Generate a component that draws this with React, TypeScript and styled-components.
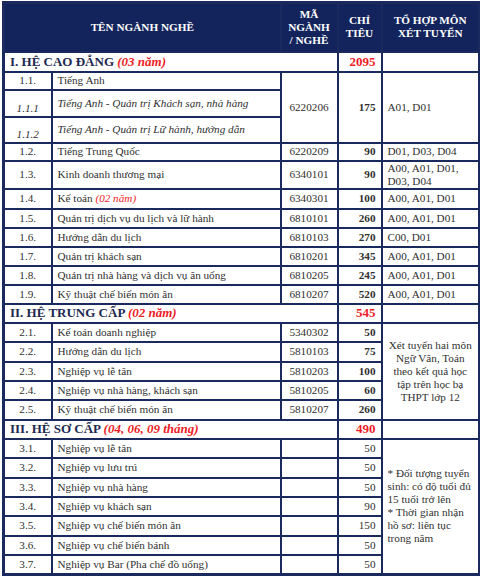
import React from "react";
import styled, { createGlobalStyle } from "styled-components";

const GlobalStyle = createGlobalStyle`
  html, body {
    margin: 0;
    padding: 0;
    background: #ffffff;
  }
  table, th, td {
    font-family: "Liberation Serif", "Times New Roman", serif;
  }
`;

const NAVY = "#13245c";
const LINE = "#1b2a5e";
const RED = "#ee1c25";

const Page = styled.div`
  width: 480px;
  height: 580px;
  padding: 1px 0 0 2px;
  box-sizing: border-box;
  font-family: "Liberation Serif", "Times New Roman", serif;
  color: #2b2b2b;
`;

const Table = styled.table`
  width: 476px;
  table-layout: fixed;
  border-collapse: collapse;
  border: 3px solid ${LINE};
  font-family: "Liberation Serif", "Times New Roman", serif;
  font-size: 11.2px;
  color: #303030;
`;

const HeadCell = styled.th`
  background: ${NAVY};
  color: #ffffff;
  font-weight: bold;
  font-size: 11.2px;
  line-height: 13px;
  text-align: center;
  vertical-align: middle;
  border: 2px solid ${LINE};
  padding: 0 2px;
`;

const Row = styled.tr<{ $h: number }>`
  height: ${(p) => p.$h}px;
`;

const Cell = styled.td<{
  $align?: "left" | "center" | "right";
  $bold?: boolean;
  $italic?: boolean;
  $valign?: "top" | "middle" | "bottom";
  $soft?: boolean;
}>`
  border: 2px solid ${LINE};
  ${(p) => (p.$soft ? "border-top-color: #8a90a6;" : "")}
  padding: ${(p) => (p.$valign === "bottom" ? "0 5px 1px" : "0 5px")};
  text-align: ${(p) => p.$align || "left"};
  vertical-align: ${(p) => p.$valign || "middle"};
  font-weight: ${(p) => (p.$bold ? "bold" : "normal")};
  font-style: ${(p) => (p.$italic ? "italic" : "normal")};
  line-height: 13px;
  white-space: nowrap;
  overflow: hidden;
`;

const NoteCell = styled.td<{ $align: "left" | "center" }>`
  border: 2px solid ${LINE};
  padding: 0 5px;
  text-align: ${(p) => p.$align};
  vertical-align: middle;
  font-size: 11.2px;
  line-height: 13px;
  color: #303030;
`;

const SectionCell = styled.td`
  border: 2px solid ${LINE};
  padding: 0 5px;
  font-weight: bold;
  font-size: 13px;
  color: #1e2a4f;
  white-space: nowrap;
  vertical-align: middle;
`;

const Note = styled.span`
  color: ${RED};
  font-style: italic;
  font-weight: bold;
`;

const NoteSmall = styled.span`
  color: ${RED};
  font-style: italic;
`;

const Total = styled.td`
  border: 2px solid ${LINE};
  padding: 0 5px;
  text-align: right;
  color: ${RED};
  font-weight: bold;
  font-size: 13px;
  vertical-align: middle;
`;

const Empty = styled.td`
  border: 2px solid ${LINE};
`;

type Item = {
  no: string;
  name: React.ReactNode;
  code: string;
  quota: string;
  combo?: string;
  h: number;
};

const caoDang: Item[] = [
  { no: "1.2.", name: "Tiếng Trung Quốc", code: "6220209", quota: "90", combo: "D01, D03, D04", h: 18 },
  { no: "1.3.", name: "Kinh doanh thương mại", code: "6340101", quota: "90", combo: "A00, A01, D01,\nD03, D04", h: 28 },
  {
    no: "1.4.",
    name: (
      <>
        Kế toán <NoteSmall>(02 năm)</NoteSmall>
      </>
    ),
    code: "6340301",
    quota: "100",
    combo: "A00, A01, D01",
    h: 20,
  },
  { no: "1.5.", name: "Quản trị dịch vụ du lịch và lữ hành", code: "6810101", quota: "260", combo: "A00, A01, D01", h: 19 },
  { no: "1.6.", name: "Hướng dẫn du lịch", code: "6810103", quota: "270", combo: "C00, D01", h: 19 },
  { no: "1.7.", name: "Quản trị khách sạn", code: "6810201", quota: "345", combo: "A00, A01, D01", h: 19 },
  { no: "1.8.", name: "Quản trị nhà hàng và dịch vụ ăn uống", code: "6810205", quota: "245", combo: "A00, A01, D01", h: 19 },
  { no: "1.9.", name: "Kỹ thuật chế biến món ăn", code: "6810207", quota: "520", combo: "A00, A01, D01", h: 19 },
];

const trungCap: Item[] = [
  { no: "2.1.", name: "Kế toán doanh nghiệp", code: "5340302", quota: "50", h: 19 },
  { no: "2.2.", name: "Hướng dẫn du lịch", code: "5810103", quota: "75", h: 20 },
  { no: "2.3.", name: "Nghiệp vụ lễ tân", code: "5810203", quota: "100", h: 19 },
  { no: "2.4.", name: "Nghiệp vụ nhà hàng, khách sạn", code: "5810205", quota: "60", h: 19 },
  { no: "2.5.", name: "Kỹ thuật chế biến món ăn", code: "5810207", quota: "260", h: 20 },
];

const soCap: Item[] = [
  { no: "3.1.", name: "Nghiệp vụ lễ tân", code: "", quota: "50", h: 19 },
  { no: "3.2.", name: "Nghiệp vụ lưu trú", code: "", quota: "50", h: 20 },
  { no: "3.3.", name: "Nghiệp vụ nhà hàng", code: "", quota: "50", h: 19 },
  { no: "3.4.", name: "Nghiệp vụ khách sạn", code: "", quota: "90", h: 19 },
  { no: "3.5.", name: "Nghiệp vụ chế biến món ăn", code: "", quota: "150", h: 20 },
  { no: "3.6.", name: "Nghiệp vụ chế biến bánh", code: "", quota: "50", h: 19 },
  { no: "3.7.", name: "Nghiệp vụ Bar (Pha chế đồ uống)", code: "", quota: "50", h: 20 },
];

const ComboText = styled.span`
  white-space: pre-line;
  line-height: 13px;
  display: inline-block;
`;

const App: React.FC = () => (
  <Page>
    <GlobalStyle />
    <Table>
      <colgroup>
        <col style={{ width: 48 }} />
        <col style={{ width: 229 }} />
        <col style={{ width: 57 }} />
        <col style={{ width: 44 }} />
        <col style={{ width: 98 }} />
      </colgroup>
      <thead>
        <Row $h={49}>
          <HeadCell colSpan={2}>TÊN NGÀNH NGHỀ</HeadCell>
          <HeadCell>
            MÃ
            <br />
            NGÀNH
            <br />/ NGHỀ
          </HeadCell>
          <HeadCell>
            CHỈ
            <br />
            TIÊU
          </HeadCell>
          <HeadCell>
            TỔ HỢP MÔN
            <br />
            XÉT TUYỂN
          </HeadCell>
        </Row>
      </thead>
      <tbody>
        <Row $h={20}>
          <SectionCell colSpan={3}>
            I. HỆ CAO ĐẲNG <Note>(03 năm)</Note>
          </SectionCell>
          <Total>2095</Total>
          <Empty />
        </Row>
        <Row $h={18}>
          <Cell $align="center">1.1.</Cell>
          <Cell>Tiếng Anh</Cell>
          <Cell rowSpan={3} $align="center">
            6220206
          </Cell>
          <Cell rowSpan={3} $align="right" $bold>
            175
          </Cell>
          <Cell rowSpan={3}>A01, D01</Cell>
        </Row>
        <Row $h={27}>
          <Cell $align="center" $italic $valign="bottom" $soft>
            1.1.1
          </Cell>
          <Cell $italic $soft>
            Tiếng Anh - Quản trị Khách sạn, nhà hàng
          </Cell>
        </Row>
        <Row $h={26}>
          <Cell $align="center" $italic $valign="bottom" $soft>
            1.1.2
          </Cell>
          <Cell $italic $soft>
            Tiếng Anh - Quản trị Lữ hành, hướng dẫn
          </Cell>
        </Row>
        {caoDang.map((r) => (
          <Row key={r.no} $h={r.h}>
            <Cell $align="center">{r.no}</Cell>
            <Cell>{r.name}</Cell>
            <Cell $align="center">{r.code}</Cell>
            <Cell $align="right" $bold>
              {r.quota}
            </Cell>
            <Cell>
              <ComboText>{r.combo}</ComboText>
            </Cell>
          </Row>
        ))}
        <Row $h={19}>
          <SectionCell colSpan={3}>
            II. HỆ TRUNG CẤP <Note>(02 năm)</Note>
          </SectionCell>
          <Total>545</Total>
          <Empty />
        </Row>
        {trungCap.map((r, i) => (
          <Row key={r.no} $h={r.h}>
            <Cell $align="center">{r.no}</Cell>
            <Cell>{r.name}</Cell>
            <Cell $align="center">{r.code}</Cell>
            <Cell $align="right" $bold>
              {r.quota}
            </Cell>
            {i === 0 && (
              <NoteCell rowSpan={trungCap.length} $align="center">
                Xét tuyển hai môn Ngữ Văn, Toán theo kết quả học tập trên học bạ THPT lớp 12
              </NoteCell>
            )}
          </Row>
        ))}
        <Row $h={19}>
          <SectionCell colSpan={3}>
            III. HỆ SƠ CẤP <Note>(04, 06, 09 tháng)</Note>
          </SectionCell>
          <Total>490</Total>
          <Empty />
        </Row>
        {soCap.map((r, i) => (
          <Row key={r.no} $h={r.h}>
            <Cell $align="center">{r.no}</Cell>
            <Cell>{r.name}</Cell>
            <Cell $align="center">{r.code}</Cell>
            <Cell $align="right">{r.quota}</Cell>
            {i === 0 && (
              <NoteCell rowSpan={soCap.length} $align="left">
                * Đối tượng tuyển sinh: có độ tuổi đủ 15 tuổi trở lên
                <br />* Thời gian nhận hồ sơ: liên tục trong năm
              </NoteCell>
            )}
          </Row>
        ))}
      </tbody>
    </Table>
  </Page>
);

export default App;
